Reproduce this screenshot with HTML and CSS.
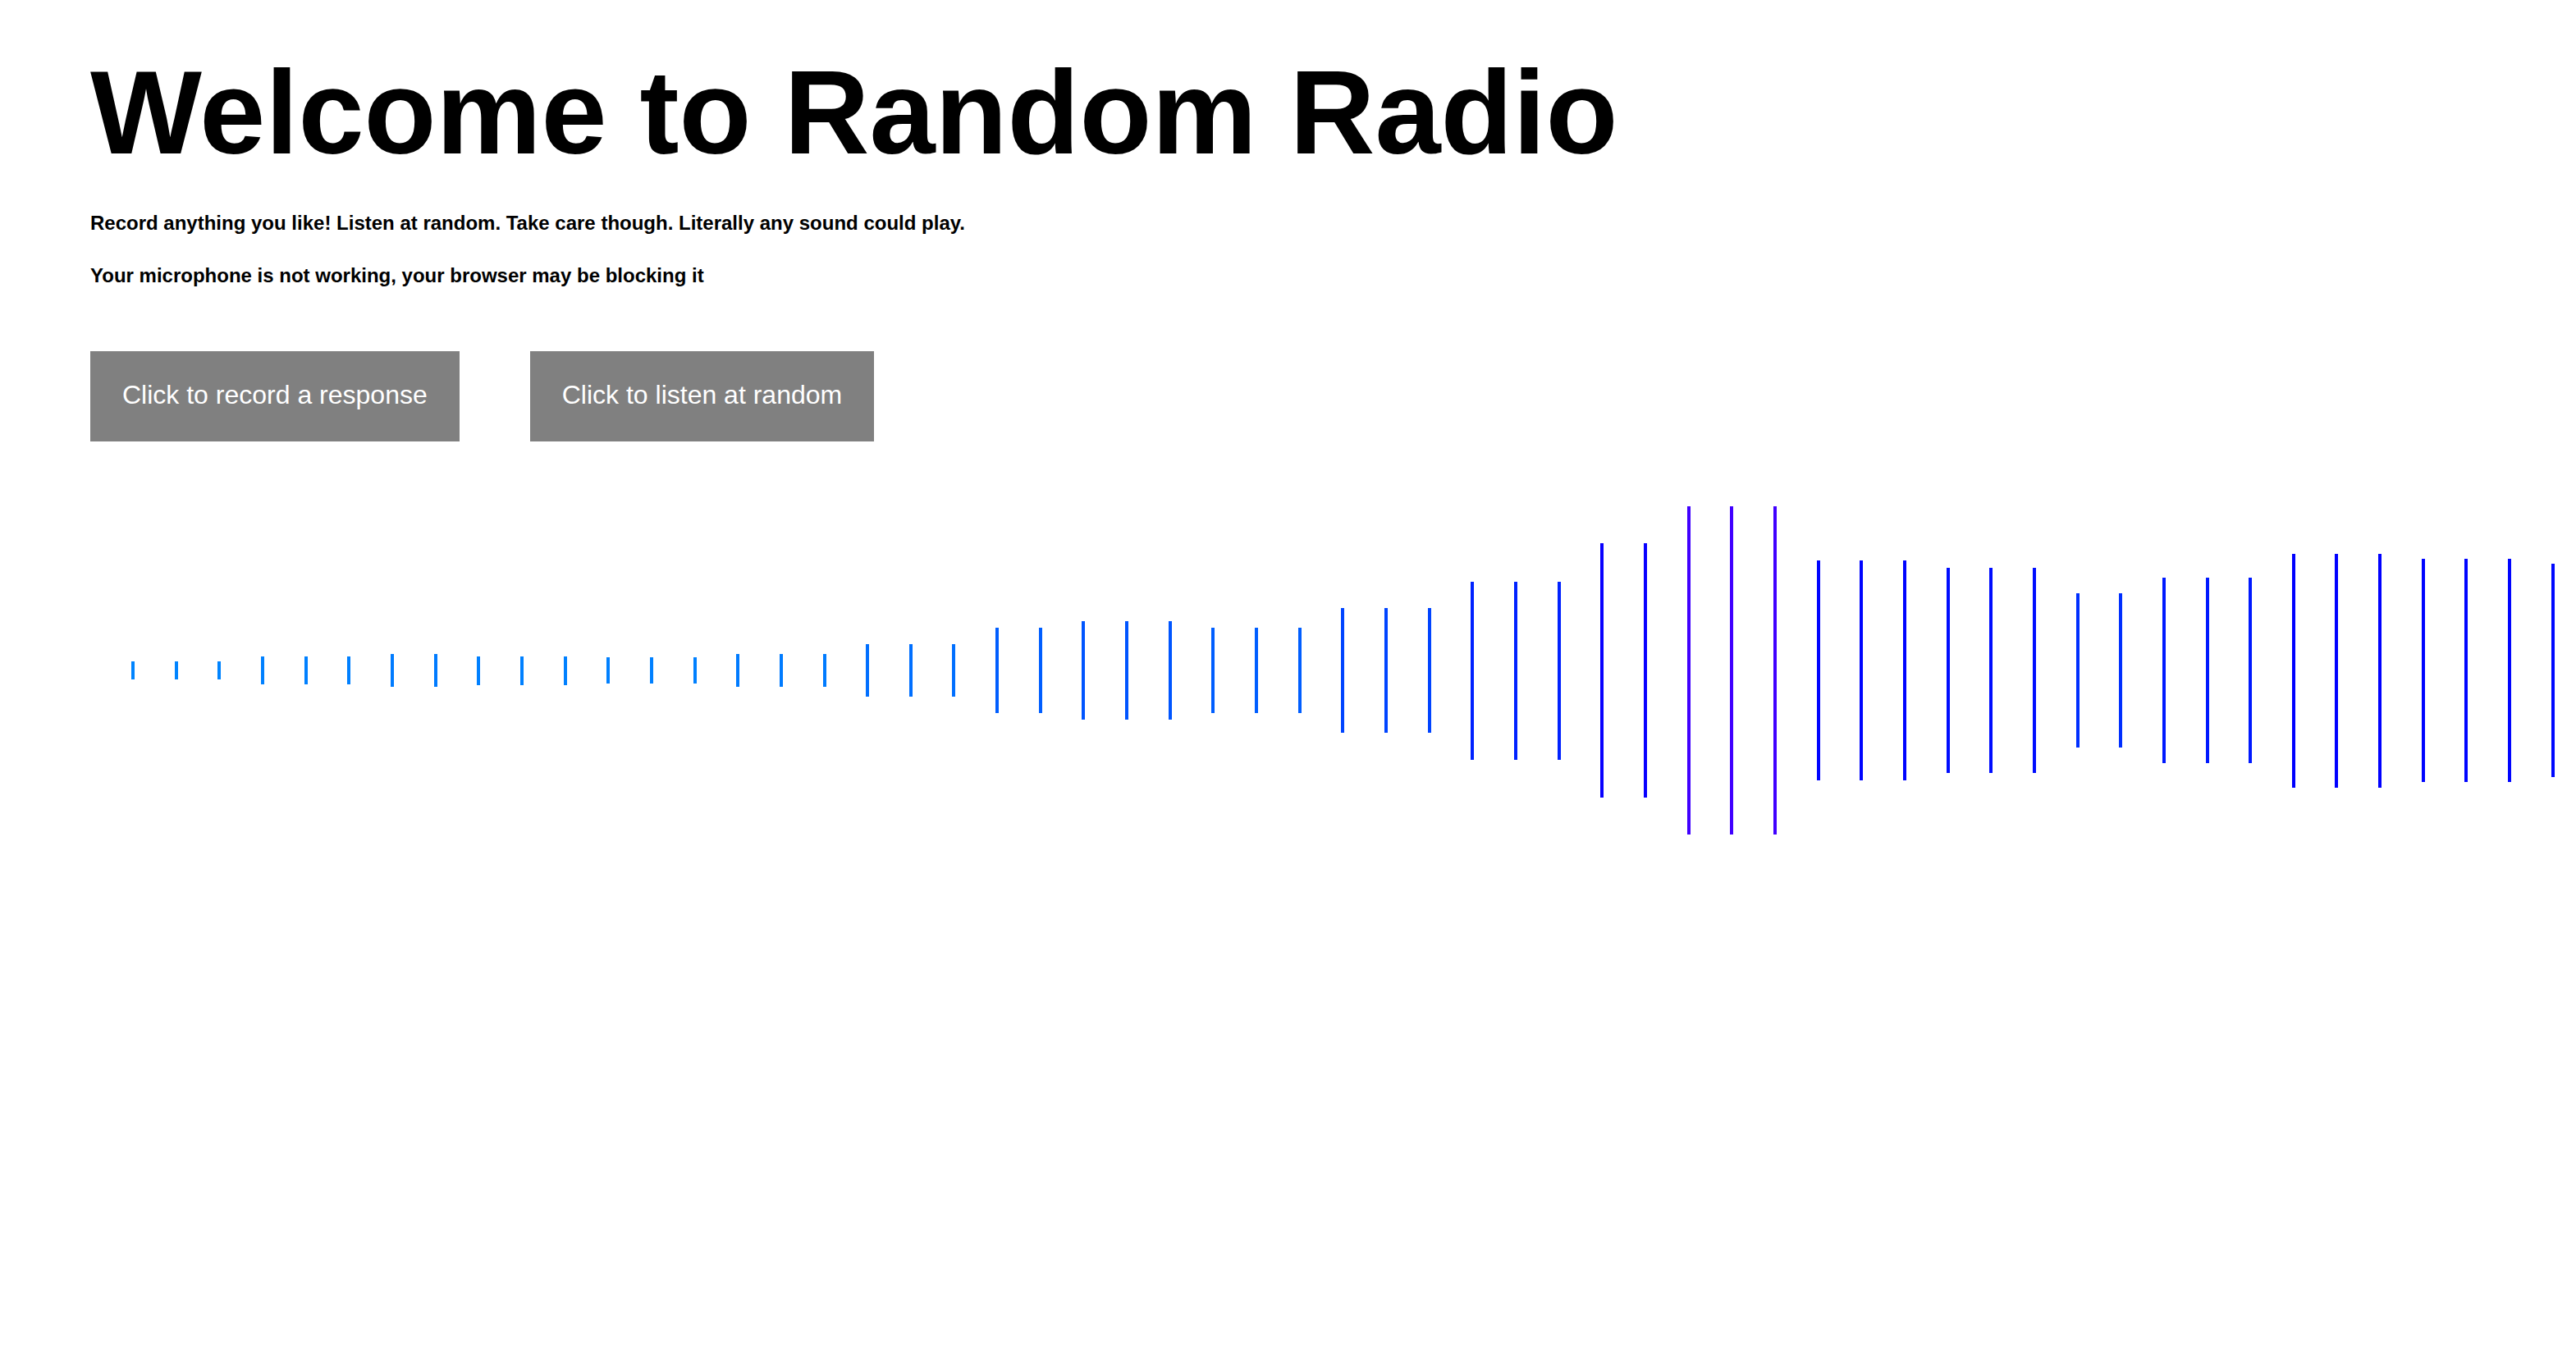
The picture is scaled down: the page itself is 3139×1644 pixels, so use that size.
FILE: index.html
```html
<!DOCTYPE html>
<html lang="en">
<head>
<meta charset="utf-8">
<title>Random Radio</title>
<link rel="stylesheet" href="styles.css">
</head>
<body>
<main class="page">
  <h1 class="title">Welcome to Random Radio</h1>
  <p class="intro">Record anything you like! Listen at random. Take care though. Literally any sound could play.</p>
  <p class="status">Your microphone is not working, your browser may be blocking it</p>
  <div class="controls">
    <button class="btn" type="button">Click to record a response</button>
    <button class="btn" type="button">Click to listen at random</button>
  </div>
  <div class="wave">
    <span class="bar" style="height:22px;background:hsl(209,100%,50%)"></span>
    <span class="bar" style="height:22px;background:hsl(209,100%,50%)"></span>
    <span class="bar" style="height:22px;background:hsl(209,100%,50%)"></span>
    <span class="bar" style="height:34px;background:hsl(210,100%,50%)"></span>
    <span class="bar" style="height:34px;background:hsl(210,100%,50%)"></span>
    <span class="bar" style="height:34px;background:hsl(210,100%,50%)"></span>
    <span class="bar" style="height:40px;background:hsl(211,100%,50%)"></span>
    <span class="bar" style="height:40px;background:hsl(211,100%,50%)"></span>
    <span class="bar" style="height:35px;background:hsl(210,100%,50%)"></span>
    <span class="bar" style="height:35px;background:hsl(210,100%,50%)"></span>
    <span class="bar" style="height:35px;background:hsl(210,100%,50%)"></span>
    <span class="bar" style="height:32px;background:hsl(210,100%,50%)"></span>
    <span class="bar" style="height:32px;background:hsl(210,100%,50%)"></span>
    <span class="bar" style="height:32px;background:hsl(210,100%,50%)"></span>
    <span class="bar" style="height:40px;background:hsl(211,100%,50%)"></span>
    <span class="bar" style="height:40px;background:hsl(211,100%,50%)"></span>
    <span class="bar" style="height:40px;background:hsl(211,100%,50%)"></span>
    <span class="bar" style="height:64px;background:hsl(214,100%,50%)"></span>
    <span class="bar" style="height:64px;background:hsl(214,100%,50%)"></span>
    <span class="bar" style="height:64px;background:hsl(214,100%,50%)"></span>
    <span class="bar" style="height:104px;background:hsl(218,100%,50%)"></span>
    <span class="bar" style="height:104px;background:hsl(218,100%,50%)"></span>
    <span class="bar" style="height:120px;background:hsl(220,100%,50%)"></span>
    <span class="bar" style="height:120px;background:hsl(220,100%,50%)"></span>
    <span class="bar" style="height:120px;background:hsl(220,100%,50%)"></span>
    <span class="bar" style="height:104px;background:hsl(218,100%,50%)"></span>
    <span class="bar" style="height:104px;background:hsl(218,100%,50%)"></span>
    <span class="bar" style="height:104px;background:hsl(218,100%,50%)"></span>
    <span class="bar" style="height:152px;background:hsl(224,100%,50%)"></span>
    <span class="bar" style="height:152px;background:hsl(224,100%,50%)"></span>
    <span class="bar" style="height:152px;background:hsl(224,100%,50%)"></span>
    <span class="bar" style="height:217px;background:hsl(232,100%,50%)"></span>
    <span class="bar" style="height:217px;background:hsl(232,100%,50%)"></span>
    <span class="bar" style="height:217px;background:hsl(232,100%,50%)"></span>
    <span class="bar" style="height:310px;background:hsl(242,100%,50%)"></span>
    <span class="bar" style="height:310px;background:hsl(242,100%,50%)"></span>
    <span class="bar" style="height:400px;background:hsl(255,100%,50%)"></span>
    <span class="bar" style="height:400px;background:hsl(255,100%,50%)"></span>
    <span class="bar" style="height:400px;background:hsl(255,100%,50%)"></span>
    <span class="bar" style="height:268px;background:hsl(239,100%,50%)"></span>
    <span class="bar" style="height:268px;background:hsl(239,100%,50%)"></span>
    <span class="bar" style="height:268px;background:hsl(239,100%,50%)"></span>
    <span class="bar" style="height:250px;background:hsl(237,100%,50%)"></span>
    <span class="bar" style="height:250px;background:hsl(237,100%,50%)"></span>
    <span class="bar" style="height:250px;background:hsl(237,100%,50%)"></span>
    <span class="bar" style="height:188px;background:hsl(229,100%,50%)"></span>
    <span class="bar" style="height:188px;background:hsl(229,100%,50%)"></span>
    <span class="bar" style="height:226px;background:hsl(234,100%,50%)"></span>
    <span class="bar" style="height:226px;background:hsl(234,100%,50%)"></span>
    <span class="bar" style="height:226px;background:hsl(234,100%,50%)"></span>
    <span class="bar" style="height:285px;background:hsl(240,100%,50%)"></span>
    <span class="bar" style="height:285px;background:hsl(240,100%,50%)"></span>
    <span class="bar" style="height:285px;background:hsl(240,100%,50%)"></span>
    <span class="bar" style="height:272px;background:hsl(239,100%,50%)"></span>
    <span class="bar" style="height:272px;background:hsl(239,100%,50%)"></span>
    <span class="bar" style="height:272px;background:hsl(239,100%,50%)"></span>
    <span class="bar" style="height:260px;background:hsl(238,100%,50%)"></span>
  </div>
</main>
</body>
</html>
```

FILE: styles.css
```css
html, body {
  margin: 0;
  padding: 0;
  background: #ffffff;
}

body {
  font-family: "Liberation Sans", Arial, Helvetica, sans-serif;
  color: #000000;
  overflow: hidden;
}

.page {
  padding: 66px 110px 0 110px;
}

.title {
  margin: 0;
  font-size: 144px;
  line-height: 144px;
  font-weight: 700;
  white-space: nowrap;
}

.intro,
.status {
  margin: 0;
  font-size: 24px;
  line-height: 28px;
  font-weight: 700;
}

.intro {
  margin-top: 48px;
}

.status {
  margin-top: 36px;
}

.controls {
  display: flex;
  gap: 86px;
  margin-top: 78px;
}

.btn {
  box-sizing: border-box;
  height: 110px;
  padding: 0 39px 4px 39px;
  border: 0;
  border-radius: 0;
  background: #808080;
  color: #ffffff;
  font-family: "Liberation Sans", Arial, Helvetica, sans-serif;
  font-size: 32px;
  line-height: 106px;
  cursor: pointer;
}

.wave {
  display: flex;
  align-items: center;
  gap: 48.66px;
  height: 400px;
  margin-top: 79px;
  padding-left: 50px;
}

.bar {
  flex: 0 0 4px;
  width: 4px;
}
```
